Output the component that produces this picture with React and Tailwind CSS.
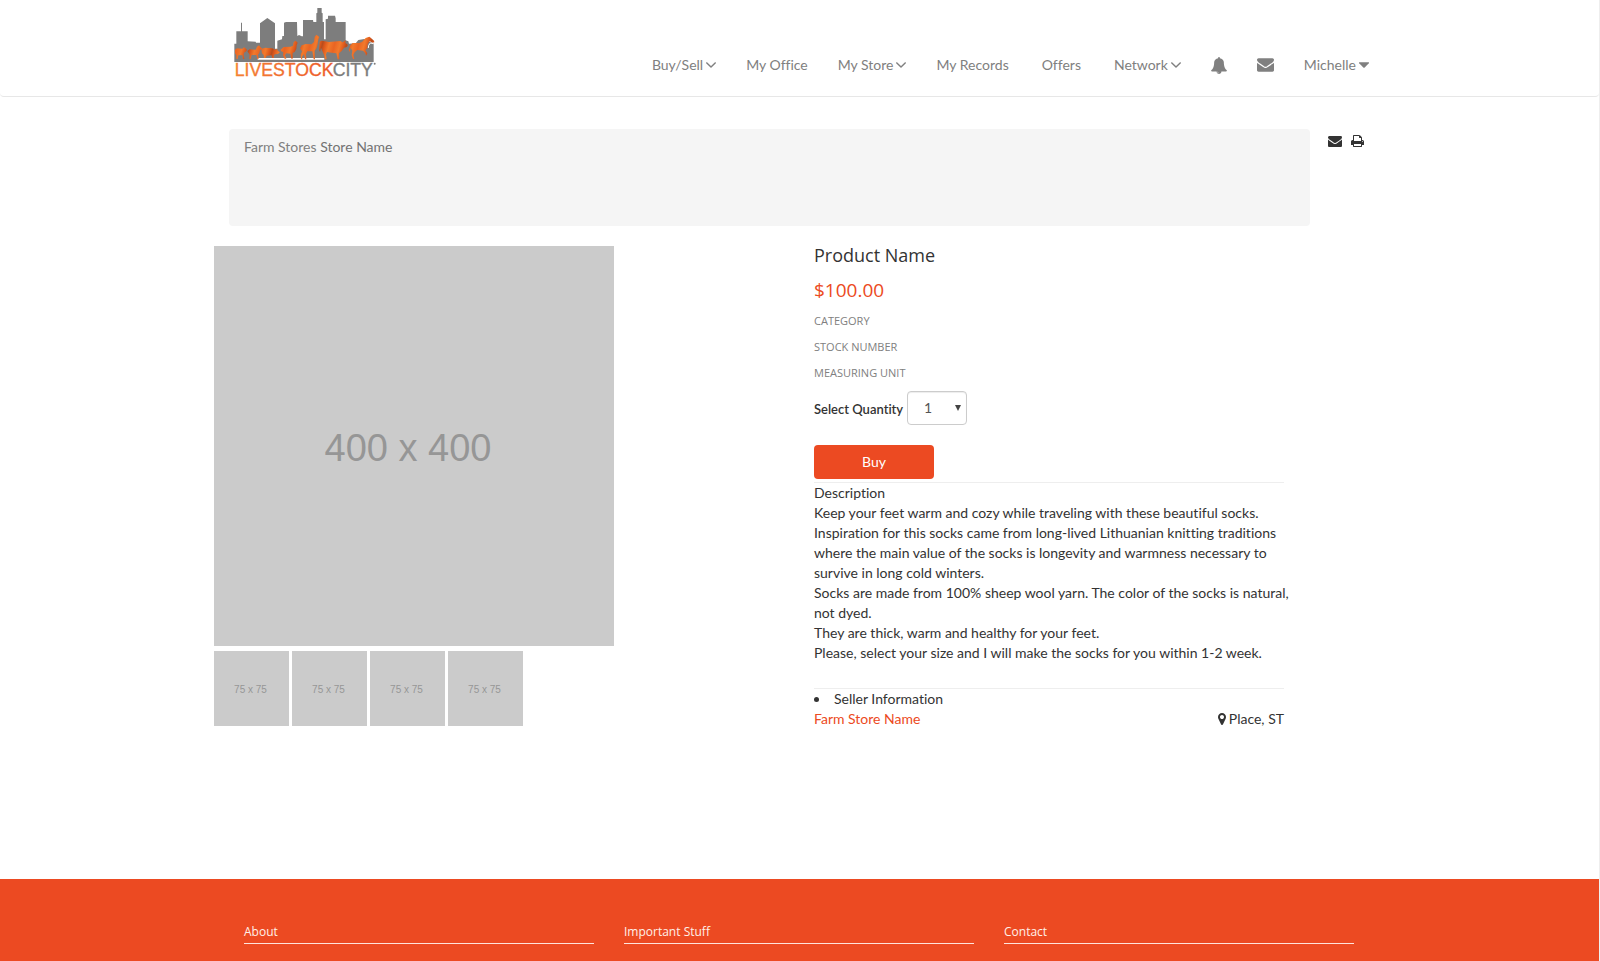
import React from "react";

const ICONS = {
  envelope: {
    box: "0 256 1792 1408",
    d: "M1792 710v794q0 66-47 113t-113 47h-1472q-66 0-113-47t-47-113v-794q44 49 101 87 362 246 497 345 57 42 92.5 65.5t94.5 48 110 24.5h2q51 0 110-24.5t94.5-48 92.5-65.5q170-123 498-345 57-39 100-87zm0-294q0 79-49 151t-122 123q-376 261-468 325-10 7-42.5 31t-54 38.5-52 32.5-57.5 27-50 9h-2q-23 0-50-9t-57.5-27-52-32.5-54-38.5-42.5-31q-91-64-262-182.5t-205-142.5q-62-42-117-115.5t-55-136.5q0-78 41.5-130t118.5-52h1472q65 0 112.5 47t47.5 113z",
  },
  bell: {
    box: "64 0 1664 1792",
    d: "M912 1696q0-16-16-16-59 0-101.5-42.5t-42.5-101.5q0-16-16-16t-16 16q0 73 51.5 124.5t124.5 51.5q16 0 16-16zm816-288q0 52-38 90t-90 38h-448q0 106-75 181t-181 75-181-75-75-181h-448q-52 0-90-38t-38-90q50-42 91-88t85-119.5 74.5-158.5 50-206 19.5-260q0-152 117-282.5t307-158.5q-8-19-8-39 0-40 28-68t68-28 68 28 28 68q0 20-8 39 190 28 307 158.5t117 282.5q0 139 19.5 260t50 206 74.5 158.5 85 119.5 91 88z",
  },
  print: {
    box: "64 128 1664 1536",
    d: "M448 1536h896v-256h-896v256zm0-640h896v-384h-160q-40 0-68-28t-28-68v-160h-640v640zm1152 64q0-26-19-45t-45-19-45 19-19 45 19 45 45 19 45-19 19-45zm128 0v416q0 13-9.5 22.5t-22.5 9.5h-224v160q0 40-28 68t-68 28h-960q-40 0-68-28t-28-68v-160h-224q-13 0-22.5-9.5t-9.5-22.5v-416q0-79 56.5-135.5t135.5-56.5h64v-544q0-40 28-68t68-28h672q40 0 88 20t76 48l152 152q28 28 48 76t20 88v256h64q79 0 135.5 56.5t56.5 135.5z",
  },
  angle: {
    box: "397 653 998 582",
    d: "M1395 736q0 13-10 23l-466 466q-10 10-23 10t-23-10l-466-466q-10-10-10-23t10-23l50-50q10-10 23-10t23 10l393 393 393-393q10-10 23-10t23 10l50 50q10 10 10 23z",
  },
  caret: {
    box: "384 640 1024 576",
    d: "M1408 704q0 26-19 45l-448 448q-19 19-45 19t-45-19l-448-448q-19-19-19-45t19-45 45-19h896q26 0 45 19t19 45z",
  },
  marker: {
    box: "384 128 1024 1536",
    d: "M1152 640q0-106-75-181t-181-75-181 75-75 181 75 181 181 75 181-75 75-181zm256 0q0 109-33 179l-364 774q-16 33-47.5 52t-67.5 19-67.5-19-46.5-52l-365-774q-33-70-33-179 0-212 150-362t362-150 362 150 150 362z",
  },
};

function Icon({ name, className }) {
  return (
    <svg viewBox={ICONS[name].box} fill="currentColor" aria-hidden="true" className={className}>
      <path d={ICONS[name].d} />
    </svg>
  );
}

function Logo() {
  return (
    <svg viewBox="0 0 480 240" className="h-20 w-40" role="img" aria-label="Livestock City">
      <defs>
        <linearGradient id="word" x1="0" x2="1" y1="0" y2="0">
          <stop offset="0" stopColor="#f58233" />
          <stop offset="1" stopColor="#ec5a2a" />
        </linearGradient>
        <linearGradient id="hide" x1="0" x2="34" y1="0" y2="9" gradientUnits="userSpaceOnUse" spreadMethod="reflect">
          <stop offset="0" stopColor="#ea6422" />
          <stop offset="0.45" stopColor="#f27a2c" />
          <stop offset="0.8" stopColor="#dd581c" />
          <stop offset="1" stopColor="#b84c1c" />
        </linearGradient>
      </defs>
      {/* skyline */}
      <path
        fill="#7d7d7d"
        d="M28 186L28 131L34 131L34 94L48 94L48 68L51 68L51 94L68 94L68 124L92 125L93 128L105 128L105 70L127 54L150 70L150 146L157 146L157 122L171 118L172 108L177 108L177 68L183 66L216 66L217 108L222 105L230 109L234 109L234 60L264 60L265 66L274 66L274 40L277 38L277 24L290 24L290 38L293 40L293 66L297 66L297 118L302 118L302 58L309 56L309 47L330 47L332 55L332 66L362 66L362 121L370 124L372 131L392 130L400 120L418 117L425 122L446 130L446 186Z"
      />
      <path fill="#fff" d="M98 174L298 174L298 179L98 179Z" />
      {/* sheep, goat, pig, calf, llama, bull, horse */}
      <g fill="url(#hide)">
        <path d="M30 149L36 145L52 146L57 142L62 145L66 150L62 155L57 158L56 165L58 177L54 177L52 166L40 166L38 177L34 177L34 166L30 160Z" />
        <path d="M67 153L74 148L92 149L96 140L102 136L106 141L112 146L105 150L103 159L99 164L101 177L97 177L94 165L80 165L77 177L73 177L74 164L70 158Z" />
        <path d="M109 147L120 143L142 145L151 149L156 146L158 152L165 157L159 162L150 163L146 167L147 174L142 174L139 166L125 167L122 174L117 174L116 165L111 160Z" />
        <path d="M167 149L176 141L196 140L204 137L206 126L212 122L218 128L215 136L214 147L209 156L203 159L203 176L199 176L196 161L184 160L180 166L184 176L179 176L174 166L175 157L168 153Z" />
        <path d="M225 145L230 136L242 132L260 133L267 126L269 111L274 104L279 108L283 111L280 118L278 133L275 144L269 152L270 178L266 178L262 154L247 154L243 162L244 178L240 178L237 162L231 170L232 178L228 178L227 164L231 154Z" />
        <path d="M284 125L290 122L312 126L346 123L353 127L362 121L361 128L369 135L366 141L357 143L350 153L342 160L343 178L338 178L334 160L320 158L306 156L303 163L305 178L300 178L297 164L292 153L288 143L285 156L282 150Z" />
        <path d="M376 136L383 129L403 129L411 126L422 114L433 110L437 113L447 122L448 127L443 128L434 124L428 132L427 145L421 150L427 160L423 168L421 160L414 152L397 150L389 157L385 165L388 177L384 177L380 165L382 152L377 143L374 156L371 150Z" />
      </g>
      <path fill="none" stroke="#fff" strokeWidth="3" d="M446 131L436 129L431 136L430 144" />
      <text x="29" y="227" fontSize="53" fontFamily="'Liberation Sans', Arial, sans-serif" fill="url(#word)" stroke="url(#word)" strokeWidth="1">
        LIVESTOCK
      </text>
      <text x="323" y="227" fontSize="53" fontFamily="'Liberation Sans', Arial, sans-serif" fill="#7c7c7c" stroke="#7c7c7c" strokeWidth="1">
        CITY
      </text>
      <circle cx="449" cy="191" r="3" fill="#7c7c7c" />
    </svg>
  );
}

const NAV = [
  { label: "Buy/Sell", icon: "angle" },
  { label: "My Office" },
  { label: "My Store", icon: "angle" },
  { label: "My Records", spaced: true },
  { label: "Offers", spaced: true },
  { label: "Network", icon: "angle" },
];

function Header() {
  return (
    <header className="rounded-b border-b border-[#e7e7e7]">
      <div className="mx-auto flex h-24 w-full max-w-[1171px] items-start justify-between pl-[11px]">
        <a href="#home">
          <Logo />
        </a>
        <nav className="flex gap-[30px] pt-[55px] pr-4 text-[#808080]">
          {NAV.map((item) => (
            <a
              key={item.label}
              href="#nav"
              className={`flex items-center gap-[3px] whitespace-nowrap ${item.spaced ? "pr-[3px]" : ""}`}
            >
              {item.label}
              {item.icon && <Icon name={item.icon} className="h-[6px] w-[10px]" />}
            </a>
          ))}
          <a href="#alerts" aria-label="Notifications" className="flex items-center">
            <Icon name="bell" className="h-[17px] w-4" />
          </a>
          <a href="#messages" aria-label="Messages" className="flex items-center">
            <Icon name="envelope" className="h-[14px] w-[17px]" />
          </a>
          <a href="#account" className="flex items-center gap-[3px]">
            Michelle
            <Icon name="caret" className="h-[6px] w-[10px]" />
          </a>
        </nav>
      </div>
    </header>
  );
}

function Gallery() {
  return (
    <section className="w-[400px] shrink-0 font-['Liberation_Sans',Arial,sans-serif] text-[#969696]">
      <div className="flex aspect-square items-center justify-center bg-[#cbcbcb] pr-3 pt-1 text-[38px]">400 x 400</div>
      <div className="mt-[5px] flex gap-[3px]">
        {[1, 2, 3, 4].map((n) => (
          <button key={n} type="button" className="h-[75px] w-[75px] bg-[#cbcbcb] pt-[2px] pr-[2px] text-[10px]">
            75 x 75
          </button>
        ))}
      </div>
    </section>
  );
}

function Details() {
  return (
    <section className="w-[470px]">
      <div className="font-['Open_Sans',sans-serif]">
        <h1 className="text-[18px] leading-[18px]">Product Name</h1>
        <p className="mt-4 text-[19px] leading-5 text-[#ec4a22]">$100.00</p>
        <ul className="mt-[13px] flex flex-col gap-[10px] text-[11px] leading-4 text-[#808080] uppercase">
          <li>Category</li>
          <li>Stock Number</li>
          <li>Measuring Unit</li>
        </ul>
      </div>
      <div className="mt-[10px] flex items-center">
        <label htmlFor="quantity" className="w-[93px] pt-px text-[13px] font-semibold whitespace-nowrap">
          Select Quantity
        </label>
        <div className="relative">
          <select
            id="quantity"
            defaultValue="1"
            className="block h-[34px] w-[60px] appearance-none rounded border border-[#ccc] bg-white pl-4 text-[14px] text-[#555] shadow-[inset_0_1px_1px_rgba(0,0,0,0.075)]"
          >
            <option>1</option>
            <option>2</option>
            <option>3</option>
          </select>
          <svg viewBox="0 0 6 6" className="pointer-events-none absolute top-[14px] right-[6px] h-[6px] w-[6px]" aria-hidden="true">
            <path d="M0 0h6L3 6z" fill="#444" />
          </svg>
        </div>
      </div>
      <button type="button" className="mt-5 block h-[34px] w-[120px] rounded bg-[#ec4a22] text-white">
        Buy
      </button>
      <div className="mt-[3px] border-t border-[#eee] pb-[25px]">
        <h2>Description</h2>
        <div className="-mr-3">
          <p>
            Keep your feet warm and cozy while traveling with these beautiful socks. Inspiration for this socks came from
            long-lived Lithuanian knitting traditions where the main value of the socks is longevity and warmness necessary to
            survive in long cold winters.
          </p>
          <p>Socks are made from 100% sheep wool yarn. The color of the socks is natural, not dyed.</p>
          <p>They are thick, warm and healthy for your feet.</p>
          <p>Please, select your size and I will make the socks for you within 1-2 week.</p>
        </div>
      </div>
      <div className="border-t border-[#eee]">
        <ul className="list-inside list-disc">
          <li>Seller Information</li>
        </ul>
        <div className="flex justify-between">
          <a href="#store" className="text-[#ec4a22]">
            Farm Store Name
          </a>
          <span className="flex items-center gap-[3px]">
            <Icon name="marker" className="h-3 w-2" />
            Place, ST
          </span>
        </div>
      </div>
    </section>
  );
}

export default function App() {
  return (
    <div className="flex min-h-screen flex-col border-r border-[#eee] bg-white font-['Lato',sans-serif] text-[14px] leading-5 text-[#333] [font-variant-ligatures:none]">
      <Header />
      <main className="mx-auto w-full max-w-[1171px] grow pt-8 pb-[150px]">
        <div className="flex items-start gap-[18px] pr-[21px] pl-[15px]">
          <div className="h-[97px] grow rounded bg-[#f5f5f5] px-[15px] py-2 text-[#808080]">
            <a href="#stores">Farm Stores</a> <span className="text-[#737373]">Store Name</span>
          </div>
          <div className="flex items-center gap-[9px] pt-[6px]">
            <a href="#email" aria-label="Email">
              <Icon name="envelope" className="h-[11px] w-[14px]" />
            </a>
            <a href="#print" aria-label="Print">
              <Icon name="print" className="h-3 w-[13px]" />
            </a>
          </div>
        </div>
        <div className="mt-5 flex justify-between pr-[101px]">
          <Gallery />
          <Details />
        </div>
      </main>
      <footer className="bg-[#ec4a22] pt-[43px] pb-[17px] text-[12px] text-[#fff0e8]">
        <div className="mx-auto grid w-full max-w-[1171px] grid-cols-3 gap-[30px] pr-[31px] pl-[30px] font-['Open_Sans',sans-serif]">
          {["About", "Important Stuff", "Contact"].map((title) => (
            <h3 key={title} className="border-b border-[#ffe4dc] pb-[2px] leading-[19px]">
              {title}
            </h3>
          ))}
        </div>
      </footer>
    </div>
  );
}
